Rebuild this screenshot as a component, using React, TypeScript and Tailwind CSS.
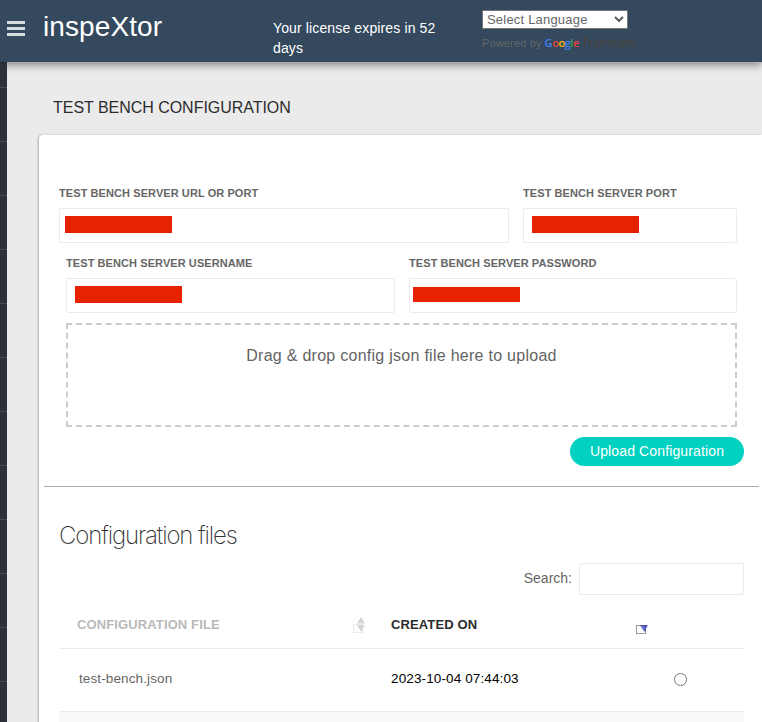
import React from "react";

type FieldProps = {
  label: string;
  className: string;
  barClass: string;
};

function Field({ label, className, barClass }: FieldProps) {
  return (
    <div className={className}>
      <div className="h-[22px] text-[11px] leading-[14px] font-bold tracking-[0.08px] whitespace-nowrap text-[#666]">
        {label}
      </div>
      <div className="h-[35px] rounded-[2px] border border-[#ebebeb] bg-white">
        <div className={`w-[107px] bg-[#e62200] ${barClass}`} />
      </div>
    </div>
  );
}

function Header() {
  return (
    <header className="relative flex h-[62px] shrink-0 bg-[#34495e] shadow-[0_2px_9px_rgba(0,0,0,0.55)]">
      <div className="mt-[21px] ml-[7px] flex h-[15px] w-[18px] flex-col justify-between">
        <span className="h-[3px] bg-[#d6dbdf]" />
        <span className="h-[3px] bg-[#d6dbdf]" />
        <span className="h-[3px] bg-[#d6dbdf]" />
      </div>
      <div className="mt-[11px] ml-[18px] w-[230px] text-[28px] leading-[32px] tracking-[0.1px] text-white">inspeXtor</div>
      <div className="mt-[18px] w-[190px] text-[14px] leading-[20px] tracking-[0.13px] text-white">
        Your license expires in 52
        <br />
        days
      </div>
      <div className="ml-[19px] w-[160px]">
        <div className="mt-[10px] flex h-[19px] w-[146px] items-center justify-between border border-[#767676] bg-white pr-[3px] pl-[4px] text-[13px] leading-[17px] tracking-[0.2px] text-[#666]">
          <span>Select Language</span>
          <svg width="10" height="7" viewBox="0 0 10 7" fill="none" stroke="#555" strokeWidth="1.8">
            <path d="M1 1l4 4 4-4" />
          </svg>
        </div>
        <div className="mt-[7px] flex h-[14px] items-center text-[11px] leading-[14px] text-[#666]">
          <span className="tracking-[0.15px] whitespace-nowrap">Powered by</span>
          <span className="ml-[3px] w-[34px] font-['Open_Sans',sans-serif] text-[11px] font-semibold tracking-[-0.45px]">
            <span className="text-[#4285f4]">G</span>
            <span className="text-[#ea4335]">o</span>
            <span className="text-[#fbbc05]">o</span>
            <span className="text-[#4285f4]">g</span>
            <span className="text-[#34a853]">l</span>
            <span className="text-[#ea4335]">e</span>
          </span>
          <span className="ml-[3px] text-[12px] font-bold tracking-[0.15px] text-[#444]">Translate</span>
        </div>
      </div>
    </header>
  );
}

function Sidebar() {
  return (
    <aside className="relative w-[7px] shrink-0 border-t border-[#22262f] bg-[#2b303b] pt-[24px]">
      {Array.from({ length: 12 }, (_, i) => (
        <div key={i} className="h-[54px] border-t border-[#484b56]" />
      ))}
    </aside>
  );
}

function ConfigForm() {
  return (
    <section className="flex flex-col pt-[51px] pr-[18px] pl-[20px]">
      <div className="flex gap-[14px]">
        <Field label="TEST BENCH SERVER URL OR PORT" className="w-[450px]" barClass="mt-[7px] ml-[5px] h-[17px]" />
        <Field label="TEST BENCH SERVER PORT" className="w-[214px]" barClass="mt-[7px] ml-[8px] h-[17px]" />
      </div>
      <div className="mt-[13px] flex gap-[14px] pl-[7px]">
        <Field label="TEST BENCH SERVER USERNAME" className="w-[329px]" barClass="mt-[7px] ml-[8px] h-[17px]" />
        <Field label="TEST BENCH SERVER PASSWORD" className="w-[328px]" barClass="mt-[8px] ml-[3px] h-[15px]" />
      </div>
      <div className="mx-[7px] mt-[10px] h-[104px] border-2 border-dashed border-[#ccc] pt-[21px] text-center text-[16px] leading-[20px] tracking-[0.27px] text-[#646464]">
        Drag &amp; drop config json file here to upload
      </div>
      <button className="mt-[10px] h-[29px] w-[174px] self-end rounded-full bg-[#00d1c1] text-[14px] leading-[29px] tracking-[0.13px] text-white">
        Upload Configuration
      </button>
    </section>
  );
}

function SortBoth() {
  return (
    <svg width="15" height="18" viewBox="0 0 15 18">
      <rect x="1.5" y="8.5" width="9" height="8" fill="#fff" stroke="#ebebeb" />
      <path d="M5 7.500L9 1l4 6.500z" fill="#d4d4d4" />
      <path d="M5 9h8l-4 7z" fill="#d4d4d4" />
    </svg>
  );
}

function SortDesc() {
  return (
    <svg width="14" height="12" viewBox="0 0 14 12">
      <rect x="1.500" y="1.500" width="9" height="8" fill="#fff" stroke="#999" />
      <path d="M5 1h8L9.300 8z" fill="#6a6ed4" />
      <path d="M10.500 1v6M5 1.500h6" stroke="#4a4a88" strokeWidth="1" />
    </svg>
  );
}

function FilesTable() {
  return (
    <section className="flex flex-col pr-[18px] pl-[20px]">
      <h2 className="mt-[33px] h-[32px] font-[Inter,'Liberation_Sans',sans-serif] text-[24px] leading-[32px] font-extralight tracking-[-1.13px] whitespace-nowrap text-[#333]">
        Configuration files
      </h2>
      <div className="mt-[11px] flex h-[32px] justify-end">
        <label className="mr-[7px] pt-[5px] text-[14px] leading-[20px] text-[#666]">Search:</label>
        <div className="w-[165px] rounded-[2px] border border-[#ebebeb]" />
      </div>
      <div className="flex h-[54px] border-b border-[#ebebeb] text-[13px] leading-[18px] font-bold tracking-[0.12px]">
        <div className="w-[275px] pt-[21px] pl-[18px] text-[#b9b9b9]">CONFIGURATION FILE</div>
        <div className="w-[57px] pt-[21px] pl-[18px]">
          <SortBoth />
        </div>
        <div className="w-[244px] pt-[21px] text-[#2b2b2b]">CREATED ON</div>
        <div className="pt-[29px]">
          <SortDesc />
        </div>
      </div>
      <div className="flex h-[63px] border-b border-[#ebebeb] text-[13.5px] leading-[18px] tracking-[0.12px]">
        <div className="w-[332px] pt-[21px] pl-[20px] text-[#666]">test-bench.json</div>
        <div className="w-[283px] pt-[21px] text-black">2023-10-04 07:44:03</div>
        <div className="mt-[24px] h-[13px] w-[13px] rounded-full border border-[#767676]" />
      </div>
      <div className="h-[30px] bg-[#f9f9f9]" />
    </section>
  );
}

export default function App() {
  return (
    <div className="flex h-[722px] w-[762px] flex-col overflow-hidden bg-[#ebebeb] font-['Liberation_Sans',Arial,sans-serif]">
      <Header />
      <div className="flex min-h-0 flex-1">
        <Sidebar />
        <main className="relative w-[755px] shrink-0 border-t border-[#b4b6bc]/70 pl-[32px]">
          <h1 className="h-[72px] pt-[35px] pl-[14px] text-[16px] leading-[20px] tracking-[-0.03px] text-[#2b2b2b]">
            TEST BENCH CONFIGURATION
          </h1>
          <div className="h-[600px] w-[723px] rounded-tl-[4px] bg-white shadow-[-1px_0_2px_rgba(0,0,0,0.25)]">
            <ConfigForm />
            <div className="mt-[20px] mr-[3px] ml-[5px] h-px bg-[#aaa]" />
            <FilesTable />
          </div>
        </main>
      </div>
    </div>
  );
}
